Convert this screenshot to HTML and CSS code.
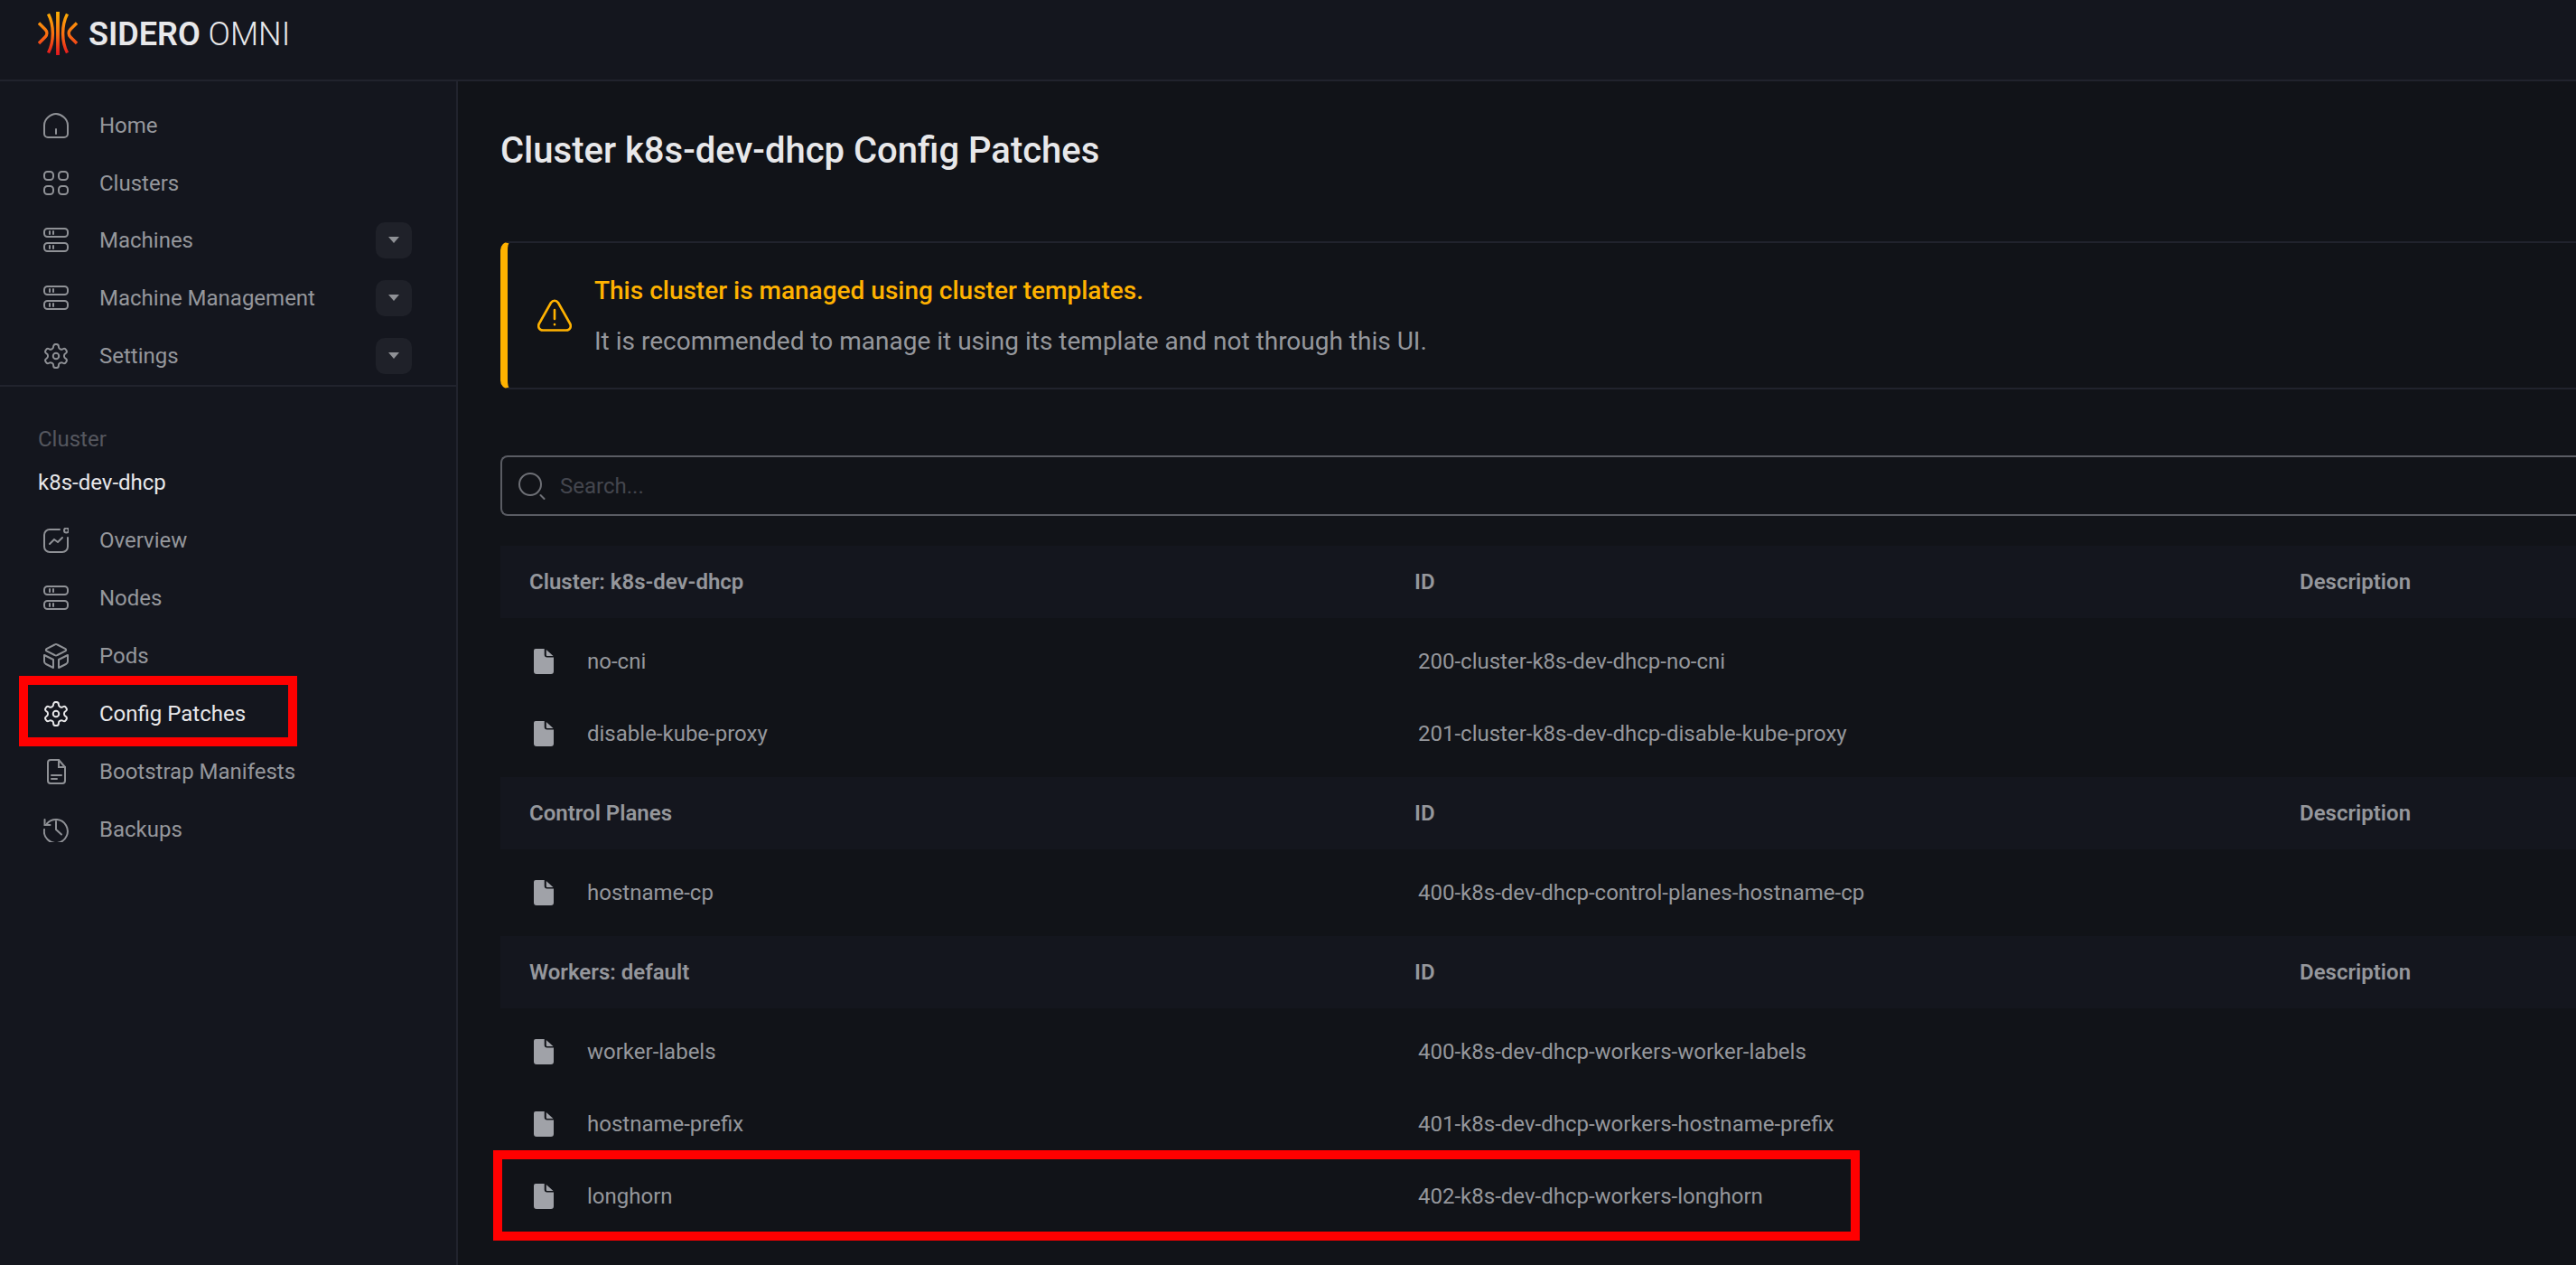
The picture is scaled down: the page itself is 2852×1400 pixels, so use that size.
FILE: index.html
```html
<!DOCTYPE html>
<html lang="en">
<head>
    <meta charset="UTF-8">
    <title>Sidero Omni - Config Patches</title>
    <link rel="stylesheet" href="styles.css">
</head>
<body>
    <svg class="defs" width="0" height="0">
        <defs>
            <linearGradient id="flame" gradientUnits="userSpaceOnUse" x1="0" y1="0" x2="0" y2="48">
                <stop offset="0" stop-color="#fbb104"/>
                <stop offset="0.55" stop-color="#f96a12"/>
                <stop offset="1" stop-color="#e5141f"/>
            </linearGradient>
            <symbol id="i-home" viewBox="0 0 28 28"><path d="M1 13.5C1 7 8 1 14 1s13 6 13 12.5V23a4 4 0 0 1-4 4H5a4 4 0 0 1-4-4z"/><path d="M14 18v5"/></symbol>
            <symbol id="i-grid" viewBox="0 0 28 28"><rect x="1" y="1" width="10" height="9" rx="3.5"/><rect x="17" y="1" width="10" height="9" rx="3.5"/><rect x="1" y="17" width="10" height="9" rx="3.5"/><rect x="17" y="17" width="10" height="9" rx="3.5"/></symbol>
            <symbol id="i-server" viewBox="0 0 28 28"><rect x="1" y="1" width="26" height="9" rx="3.5"/><rect x="1" y="17" width="26" height="9" rx="3.5"/><path d="M7 4v3M11 4v3M7 20v3M11 20v3"/></symbol>
            <symbol id="i-gear" viewBox="1.300 1.300 21.400 21.400"><path stroke-width="1.500" d="M12.220 2h-.44a2 2 0 0 0-2 2v.18a2 2 0 0 1-1 1.730l-.43.25a2 2 0 0 1-2 0l-.15-.08a2 2 0 0 0-2.730.73l-.22.38a2 2 0 0 0 .73 2.730l.15.1a2 2 0 0 1 1 1.720v.51a2 2 0 0 1-1 1.740l-.15.09a2 2 0 0 0-.73 2.730l.22.38a2 2 0 0 0 2.730.73l.15-.08a2 2 0 0 1 2 0l.43.25a2 2 0 0 1 1 1.730V20a2 2 0 0 0 2 2h.44a2 2 0 0 0 2-2v-.18a2 2 0 0 1 1-1.730l.43-.25a2 2 0 0 1 2 0l.15.08a2 2 0 0 0 2.730-.73l.22-.39a2 2 0 0 0-.73-2.730l-.15-.08a2 2 0 0 1-1-1.740v-.5a2 2 0 0 1 1-1.740l.15-.09a2 2 0 0 0 .73-2.730l-.22-.38a2 2 0 0 0-2.730-.73l-.15.08a2 2 0 0 1-2 0l-.43-.25a2 2 0 0 1-1-1.730V4a2 2 0 0 0-2-2z"/><circle stroke-width="1.500" cx="12" cy="12" r="2.500"/></symbol>
            <symbol id="i-chart" viewBox="0 0 28 28"><path d="M18 2H7a6 6 0 0 0-6 6v13a6 6 0 0 0 6 6h14a6 6 0 0 0 6-6V11"/><path d="M7 18l5-5 4 3 5-5"/><circle cx="25.500" cy="3" r="2.500"/></symbol>
            <symbol id="i-box" viewBox="0 0 28 28"><path d="M12.500 1.500a3 3 0 0 1 3 0l9 4.500a1.500 1.500 0 0 1 0 2.500l-9 4.500a3 3 0 0 1-3 0l-9-4.500a1.500 1.500 0 0 1 0-2.500z"/><path d="M1 13l10 5v9l-8-4q-2-1-2-3z" stroke-linejoin="round"/><path d="M27 13l-10 5v9l8-4q2-1 2-3z" stroke-linejoin="round"/></symbol>
            <symbol id="i-doc" viewBox="0 0 28 28"><path d="M5 4a3 3 0 0 1 3-3h9l7 8v15a3 3 0 0 1-3 3H8a3 3 0 0 1-3-3z" stroke-linejoin="round"/><path d="M17 1v8h7M9 18h11M9 22h6"/></symbol>
            <symbol id="i-history" viewBox="0 0 28 28"><path d="M4 7.500A13 13 0 1 1 1 14"/><path d="M1.500 3v6h6M14 5v9l6 5.500"/></symbol>
            <symbol id="i-file" viewBox="0 0 22 28"><path d="M2 0h9.700v6.500a3 3 0 0 0 3 3H22V25a3 3 0 0 1-3 3H3a3 3 0 0 1-3-3V2a2 2 0 0 1 2-2zM13.800 1L21.500 8h-6.700a1 1 0 0 1-1-1z"/></symbol>
        </defs>
    </svg>

    <header class="topbar">
        <svg class="logo" viewBox="0 0 44 48" fill="none" stroke="url(#flame)" stroke-width="3.400">
            <path d="M22 0v48" stroke-width="3.800"/>
            <path d="M11.500 2.500C18 15 18 33 11.500 45.500"/>
            <path d="M32.500 2.500C26 15 26 33 32.500 45.500"/>
            <path d="M1 12.500l7 7c2.500 2.500 2.500 6 0 8.500l-7 7"/>
            <path d="M43 12.500l-7 7c-2.500 2.500-2.500 6 0 8.500l7 7"/>
        </svg>
        <span class="brand"><b>SIDERO</b> OMNI</span>
    </header>

    <div class="layout">
        <aside class="sidebar">
            <nav class="nav nav-top">
                <a class="nav-item"><svg class="nav-icon"><use href="#i-home"/></svg>Home</a>
                <a class="nav-item"><svg class="nav-icon"><use href="#i-grid"/></svg>Clusters</a>
                <a class="nav-item"><svg class="nav-icon"><use href="#i-server"/></svg>Machines<span class="caret-btn"></span></a>
                <a class="nav-item"><svg class="nav-icon"><use href="#i-server"/></svg>Machine Management<span class="caret-btn"></span></a>
                <a class="nav-item"><svg class="nav-icon"><use href="#i-gear"/></svg>Settings<span class="caret-btn"></span></a>
            </nav>
            <div class="cluster-label">Cluster</div>
            <div class="cluster-name">k8s-dev-dhcp</div>
            <nav class="nav">
                <a class="nav-item"><svg class="nav-icon"><use href="#i-chart"/></svg>Overview</a>
                <a class="nav-item"><svg class="nav-icon"><use href="#i-server"/></svg>Nodes</a>
                <a class="nav-item"><svg class="nav-icon"><use href="#i-box"/></svg>Pods</a>
                <a class="nav-item active"><svg class="nav-icon"><use href="#i-gear"/></svg>Config Patches</a>
                <a class="nav-item"><svg class="nav-icon"><use href="#i-doc"/></svg>Bootstrap Manifests</a>
                <a class="nav-item"><svg class="nav-icon"><use href="#i-history"/></svg>Backups</a>
            </nav>
        </aside>

        <main class="content">
            <h1 class="title">Cluster k8s-dev-dhcp Config Patches</h1>

            <div class="alert">
                <svg class="alert-icon" viewBox="0 0 38 36" fill="none" stroke="#ffb200" stroke-width="2.600" stroke-linecap="round" stroke-linejoin="round">
                    <path d="M15 4c2-3 6-3 8 0l13 23c2 3.500 0 7.500-4 7.500H6c-4 0-6-4-4-7.500z"/>
                    <path d="M19 12v10M19 28v.2"/>
                </svg>
                <div class="alert-body">
                    <div class="alert-title">This cluster is managed using cluster templates.</div>
                    <div class="alert-text">It is recommended to manage it using its template and not through this UI.</div>
                </div>
            </div>

            <div class="search">
                <svg class="search-icon" viewBox="0 0 30 30" fill="none" stroke="#6e7076" stroke-width="2"><circle cx="13" cy="13" r="12"/><path d="M24.500 25l4 4" stroke-linecap="round"/></svg>
                <span class="search-text">Search...</span>
            </div>

            <div class="group-head"><span>Cluster: k8s-dev-dhcp</span><span>ID</span><span>Description</span></div>
            <div class="group-rows">
                <div class="row"><span class="row-name"><svg class="file-icon"><use href="#i-file"/></svg>no-cni</span><span>200-cluster-k8s-dev-dhcp-no-cni</span></div>
                <div class="row"><span class="row-name"><svg class="file-icon"><use href="#i-file"/></svg>disable-kube-proxy</span><span>201-cluster-k8s-dev-dhcp-disable-kube-proxy</span></div>
            </div>
            <div class="group-head"><span>Control Planes</span><span>ID</span><span>Description</span></div>
            <div class="group-rows">
                <div class="row"><span class="row-name"><svg class="file-icon"><use href="#i-file"/></svg>hostname-cp</span><span>400-k8s-dev-dhcp-control-planes-hostname-cp</span></div>
            </div>
            <div class="group-head"><span>Workers: default</span><span>ID</span><span>Description</span></div>
            <div class="group-rows">
                <div class="row"><span class="row-name"><svg class="file-icon"><use href="#i-file"/></svg>worker-labels</span><span>400-k8s-dev-dhcp-workers-worker-labels</span></div>
                <div class="row"><span class="row-name"><svg class="file-icon"><use href="#i-file"/></svg>hostname-prefix</span><span>401-k8s-dev-dhcp-workers-hostname-prefix</span></div>
                <div class="row marked"><span class="row-name"><svg class="file-icon"><use href="#i-file"/></svg>longhorn</span><span>402-k8s-dev-dhcp-workers-longhorn</span></div>
            </div>
        </main>
    </div>
</body>
</html>
```

FILE: styles.css
```css
:root {
    --side-bg: #14161e;
    --main-bg: #111318;
    --line: #21232d;
    --text: #95979c;
    --amber: #ffb200;
    --red: #ff0000;
}
html, body { margin: 0; height: 1400px; overflow: hidden; }
body { background: var(--main-bg); color: var(--text); font-family: Roboto, sans-serif; font-size: 24px; }
.defs { position: absolute; }
.topbar {
    height: 88px; background: var(--side-bg); border-bottom: 2px solid var(--line);
    display: flex; align-items: flex-start; padding-left: 42px;
}
.logo { width: 44px; height: 48px; margin-top: 13px; flex: none; }
.brand { margin: 18px 0 0 12px; font-size: 36px; line-height: 40px; color: #e8e8ea; font-weight: 300; }
.brand b { font-weight: 600; }
.layout { display: flex; height: 1310px; }
.sidebar { width: 505px; flex: none; background: var(--side-bg); border-right: 2px solid var(--line); }
.nav { display: flex; flex-direction: column; }
.nav-top { padding-top: 17px; height: 319px; border-bottom: 2px solid var(--line); }
.nav-item { height: 64px; display: flex; align-items: center; padding: 0 49px 0 48px; position: relative; }
.nav-icon { width: 28px; height: 28px; margin-right: 34px; fill: none; stroke: #8f9196; stroke-width: 2; stroke-linecap: round; flex: none; overflow: visible; }
.caret-btn { position: relative; width: 40px; height: 40px; border-radius: 10px; background: #1f2129; margin-left: auto; }
.caret-btn::after {
    content: ""; position: absolute; left: 14px; top: 16px; width: 0; height: 0;
    border-left: 6px solid transparent; border-right: 6px solid transparent; border-top: 7px solid #8f9196;
}
.cluster-label { padding: 44px 0 0 42px; line-height: 28px; color: #55575f; }
.cluster-name { padding: 20px 0 18px 42px; line-height: 28px; color: #e8e8ea; }
.active { color: #e8e8ea; }
.active .nav-icon { stroke: #e8e8ea; }
.active::after { content: ""; position: absolute; left: 21px; top: -10px; width: 288px; height: 58px; border: 10px solid var(--red); }
.content { flex: 1; min-width: 0; padding-left: 47px; }
.title { margin: 0; padding-top: 55px; height: 122px; font-size: 40px; line-height: 44px; font-weight: 500; color: #e8e8ea; }
.alert {
    height: 160px; display: flex; align-items: center;
    border-top: 2px solid var(--line); border-bottom: 2px solid var(--line); border-left: 8px solid var(--amber); border-radius: 10px 0 0 10px;
}
.alert-icon { width: 38px; height: 36px; margin: 0 25px 0 33px; flex: none; }
.alert-body { padding-top: 2px; font-size: 28px; line-height: 32px; }
.alert-title { color: var(--amber); font-weight: 500; margin-bottom: 24px; }
.search {
    margin-top: 73px; height: 63px; display: flex; align-items: center;
    border: 2px solid #5a5c63; border-right: 0; border-radius: 8px 0 0 8px;
}
.search-icon { width: 30px; height: 30px; margin: 0 16px 0 18px; flex: none; }
.search-text { color: #44464e; }
.group-head {
    height: 80px; background: var(--side-bg); font-weight: 600;
    display: grid; grid-template-columns: 980px 980px 1fr; align-items: center; padding-left: 32px;
}
.search + .group-head { margin-top: 33px; }
.group-rows { padding: 8px 0; }
.row { height: 80px; display: grid; grid-template-columns: 979px 1fr; align-items: center; padding-left: 37px; position: relative; }
.row-name { display: flex; align-items: center; }
.file-icon { width: 22px; height: 28px; margin-right: 37px; fill: #a0a2a8; }
.marked::after { content: ""; position: absolute; left: -8px; top: -11px; width: 1493px; height: 80px; border: 10px solid var(--red); }
```
